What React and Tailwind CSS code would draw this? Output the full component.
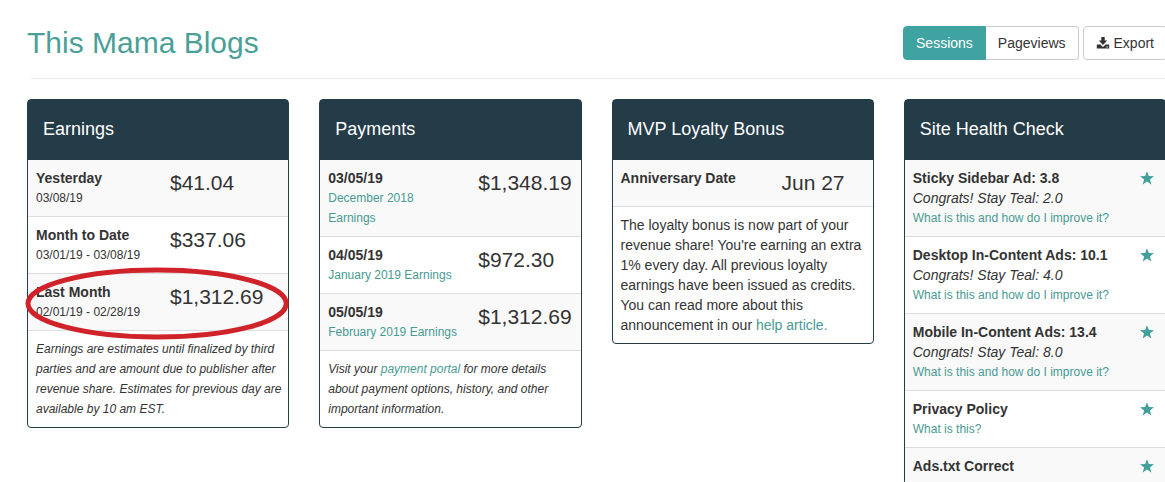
import React from 'react';
import clsx from 'clsx';

const earnings = [
  { label: 'Yesterday', range: '03/08/19', amount: '$41.04' },
  { label: 'Month to Date', range: '03/01/19 - 03/08/19', amount: '$337.06' },
  { label: 'Last Month', range: '02/01/19 - 02/28/19', amount: '$1,312.69', circled: true },
];

const payments = [
  { date: '03/05/19', period: 'December 2018 Earnings', amount: '$1,348.19' },
  { date: '04/05/19', period: 'January 2019 Earnings', amount: '$972.30' },
  { date: '05/05/19', period: 'February 2019 Earnings', amount: '$1,312.69' },
];

const healthChecks = [
  { title: 'Sticky Sidebar Ad: 3.8', note: 'Congrats! Stay Teal: 2.0', help: 'What is this and how do I improve it?' },
  { title: 'Desktop In-Content Ads: 10.1', note: 'Congrats! Stay Teal: 4.0', help: 'What is this and how do I improve it?' },
  { title: 'Mobile In-Content Ads: 13.4', note: 'Congrats! Stay Teal: 8.0', help: 'What is this and how do I improve it?' },
  { title: 'Privacy Policy', help: 'What is this?' },
  { title: 'Ads.txt Correct' },
];

const StarIcon = () => (
  <svg className="mt-[3px] h-3.5 w-3.5 text-[#41a09b]" viewBox="0 0 14 14" fill="currentColor" aria-hidden="true">
    <path d="M7 0.2 L8.8 5 L14 5.2 L9.9 8.4 L11.3 13.4 L7 10.5 L2.7 13.4 L4.1 8.4 L0 5.2 L5.2 5 Z" />
  </svg>
);

const DownloadIcon = () => (
  <svg className="h-3.5 w-3.5" viewBox="0 0 14 14" fill="currentColor" aria-hidden="true">
    <path d="M5.3 1 H8.7 V4.6 H11.2 L7 9 L2.8 4.6 H5.3 Z" />
    <path d="M0.8 8.6 H4.4 L7 11.1 L9.6 8.6 H13.2 V12.6 H0.8 Z M10.4 10.4 V11.4 H11.9 V10.4 Z" fillRule="evenodd" />
  </svg>
);

const Card = ({ title, children }) => (
  <section className="rounded border border-[#243b48]">
    <h2 className="flex h-[60px] items-center bg-[#243b48] px-[15px] pb-0.5 text-lg text-white">{title}</h2>
    {children}
  </section>
);

const Table = ({ children }) => (
  <table className="w-full table-fixed border-separate border-spacing-0">
    <tbody>{children}</tbody>
  </table>
);

const Row = ({ className, children }) => (
  <tr className={clsx('odd:bg-[#f9f9f9] first:*:border-t-0', className)}>{children}</tr>
);

const Cell = ({ className, children }) => (
  <td className={clsx('border-t border-[#ddd] p-2 align-top', className)}>{children}</td>
);

const Amount = ({ children }) => (
  <span className="block text-[21px] leading-[30px] whitespace-nowrap">{children}</span>
);

const Link = ({ className, children }) => (
  <a href="#" className={clsx('text-[#489a93]', className)}>{children}</a>
);

const Footnote = ({ children }) => (
  <p className="border-t border-[#ddd] py-2 pr-1 pl-2 text-xs leading-5 italic">{children}</p>
);

// Hand-drawn style marker around a row
const Marker = () => (
  <svg
    className="pointer-events-none absolute -top-1.5 -left-[3px] h-[73px] w-[calc(100%+4px)]"
    viewBox="0 0 264 73"
    preserveAspectRatio="none"
    aria-hidden="true"
  >
    <ellipse cx="132" cy="36.5" rx="129" ry="33.5" fill="none" stroke="#cf2229" strokeWidth="5" />
  </svg>
);

const EarningsCard = () => (
  <Card title="Earnings">
    <Table>
      {earnings.map((row) => (
        <Row key={row.label} className="relative">
          <Cell className="w-[134px]">
            <strong className="block">{row.label}</strong>
            <span className="block text-xs leading-5 whitespace-nowrap">{row.range}</span>
            {row.circled && <Marker />}
          </Cell>
          <Cell>
            <Amount>{row.amount}</Amount>
          </Cell>
        </Row>
      ))}
    </Table>
    <Footnote>
      Earnings are estimates until finalized by third parties and are amount due to publisher after
      revenue share. Estimates for previous day are available by 10 am EST.
    </Footnote>
  </Card>
);

const PaymentsCard = () => (
  <Card title="Payments">
    <Table>
      {payments.map((row) => (
        <Row key={row.date}>
          <Cell className="w-[150px]">
            <strong className="block">{row.date}</strong>
            <Link className="block text-xs leading-5">{row.period}</Link>
          </Cell>
          <Cell>
            <Amount>{row.amount}</Amount>
          </Cell>
        </Row>
      ))}
    </Table>
    <Footnote>
      Visit your <Link>payment portal</Link> for more details about payment options, history, and
      other important information.
    </Footnote>
  </Card>
);

const LoyaltyCard = () => (
  <Card title="MVP Loyalty Bonus">
    <Table>
      <Row>
        <Cell className="w-[161px]">
          <strong>Anniversary Date</strong>
        </Cell>
        <Cell>
          <Amount>Jun 27</Amount>
        </Cell>
      </Row>
    </Table>
    <p className="border-t border-[#ddd] p-2">
      The loyalty bonus is now part of your revenue share! You're earning an extra 1% every day. All
      previous loyalty earnings have been issued as credits. You can read more about this
      announcement in our <Link>help article.</Link>
    </p>
  </Card>
);

const HealthCard = () => (
  <Card title="Site Health Check">
    <Table>
      {healthChecks.map((row) => (
        <Row key={row.title}>
          <Cell>
            <strong className="block">{row.title}</strong>
            {row.note && <em className="block">{row.note}</em>}
            {row.help && <Link className="block text-xs leading-5">{row.help}</Link>}
          </Cell>
          <Cell className="w-[33px]">
            <StarIcon />
          </Cell>
        </Row>
      ))}
    </Table>
  </Card>
);

const App = () => (
  <div className="h-screen overflow-hidden bg-white pl-[27px] font-['Liberation_Sans',Arial,sans-serif] text-sm leading-5 text-[#333]">
    <div className="-mr-px">
      <header className="-mr-px flex items-center justify-between pt-[26px] pb-[18px]">
        <h1 className="text-3xl leading-[34px] text-[#4a9f97]">This Mama Blogs</h1>
        <div className="flex gap-1">
          <div className="flex">
            <button type="button" className="rounded-l border border-[#3fa3a1] bg-[#3fa3a1] px-3 py-1.5 text-white">
              Sessions
            </button>
            <button type="button" className="rounded-r border border-l-0 border-[#ccc] bg-white px-3 py-1.5">
              Pageviews
            </button>
          </div>
          <button type="button" className="flex items-center gap-1 rounded border border-[#ccc] bg-white px-3 py-1.5">
            <DownloadIcon />
            Export
          </button>
        </div>
      </header>
      <hr className="ml-1 border-[#eee]" />

      <main className="mt-5 grid grid-cols-4 items-start gap-[30px]">
        <EarningsCard />
        <PaymentsCard />
        <LoyaltyCard />
        <HealthCard />
      </main>
    </div>
  </div>
);

export default App;
